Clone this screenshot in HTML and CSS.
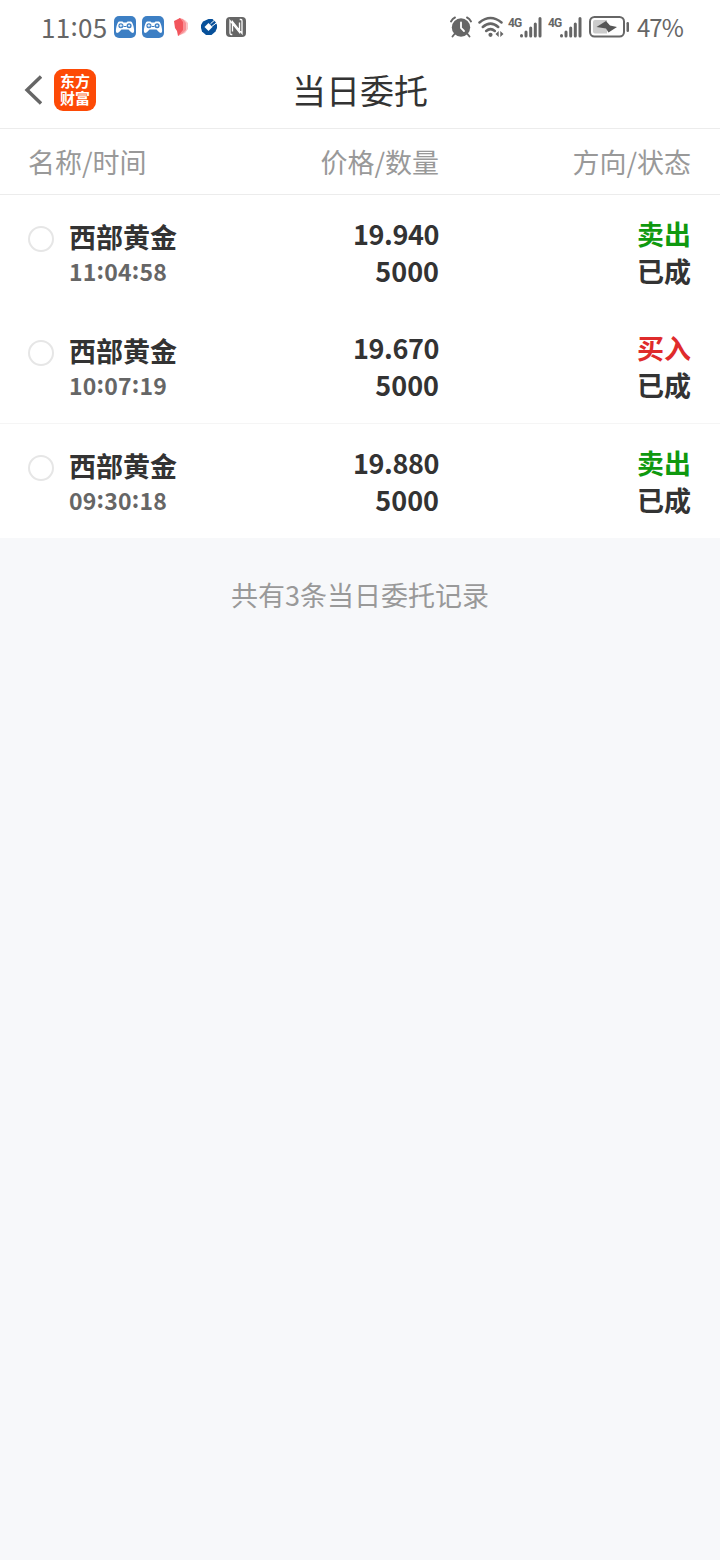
FILE: index.html
```html
<!DOCTYPE html>
<html lang="zh-CN">
<head>
<meta charset="utf-8">
<title>当日委托</title>
<link rel="stylesheet" href="styles.css">
</head>
<body>
<svg class="defs" aria-hidden="true">
  <symbol id="gamepad" viewBox="0 0 22 22">
    <rect width="22" height="22" rx="5" fill="#3d7fc4"/>
    <path d="M5 5.500h3.500l1 1h3l1-1h3.500q2 1 3 7.500q.5 3.500-1 4q-1.500 0-4.500-3.500h-7q-3 3.500-4.500 3.500q-1.500-.5-1-4q1-6.500 3-7.500z" fill="#fff"/>
    <circle cx="6.900" cy="9.700" r="2.500" fill="#3d7fc4"/><circle cx="15.100" cy="9.700" r="2.500" fill="#3d7fc4"/>
    <path d="M5.400 9.700h3M6.900 8.200v3M14 9.700h2.200M15.100 8.600v2.200" stroke="#fff" stroke-width=".9"/>
    <path d="M9.500 10.500h3" stroke="#3d7fc4"/>
  </symbol>
  <symbol id="signal" viewBox="0 0 22 22">
    <path d="M1.500 20v-.5M6 20v-4M10.700 20v-8M15.300 20v-12M20 20v-17.500" fill="none" stroke="#666" stroke-width="3" stroke-linecap="round"/>
  </symbol>
</svg>

<header class="status">
  <div class="status-left">
    <span class="clock">11<span class="colon">:</span>05</span>
    <svg width="22" height="22"><use href="#gamepad"/></svg>
    <svg width="22" height="22"><use href="#gamepad"/></svg>
    <svg class="petal" width="16" height="20" viewBox="0 0 16 20">
      <path d="M6 2L11 3L14 6V12L11 16L4 19z" fill="#fbc3c5"/>
      <path d="M5 1L9 2L12 6V13L9 16L4 19z" fill="#f98f94"/>
      <path d="M0 4L6 1L9 5V13L4 19L3 14L1 11z" fill="#f2555c"/>
    </svg>
    <svg class="bank" width="18" height="18" viewBox="0 0 18 18">
      <path d="M8.500 1H12.500L15.500 4L17 7V10L15.500 13.500L11.500 17H6L2 13.500L1 10V7L3 3.500z" fill="#07509a"/>
      <path d="M8.500 5L12.500 9L8.500 13L4.500 9z" fill="#fff"/>
      <path d="M10.500 5.800L14.500 2.200M12 8.300L17.500 4" stroke="#fff" stroke-width="1"/>
    </svg>
    <svg width="20" height="20" viewBox="0 0 20 20">
      <rect width="20" height="20" rx="4" fill="#666"/>
      <path d="M6.300 17.500H5Q4 17.500 4 16V3.500L13.500 15.500V5.500M13.700 2.500H15Q16 2.500 16 4V16.500L6.500 4.500V14.500" fill="none" stroke="#fff" stroke-width="1.300"/>
    </svg>
  </div>
  <div class="status-right">
    <svg width="22" height="22" viewBox="0 0 22 22">
      <circle cx="11" cy="11.500" r="9.200" fill="#666"/>
      <path d="M1 5.500Q2.500 2.500 5 1.500M21 5.500Q19.500 2.500 17 1.500M4.500 18L2.500 20.500M17.500 18L19.500 20.500" fill="none" stroke="#666" stroke-width="1.900" stroke-linecap="round"/>
      <path d="M11 6.500V12L14 15" fill="none" stroke="#fff" stroke-width="1.800" stroke-linecap="round"/>
    </svg>
    <svg class="wifi" width="26" height="22" viewBox="0 0 26 22">
      <path d="M1.500 6.500Q12.500-2.500 23.500 6.500M4.800 11Q12.500 4.200 20.200 11M8.200 15Q12.500 11.200 16.800 15" fill="none" stroke="#666" stroke-width="2.500" stroke-linecap="round"/>
      <circle cx="12.500" cy="18.800" r="2.100" fill="#666"/>
      <path d="M20.700 15V21L17.500 18zM22.300 15V21L25.500 18z" fill="#666"/>
    </svg>
    <span class="net">4G</span><svg class="bars" width="22" height="22"><use href="#signal"/></svg>
    <span class="net second">4G</span><svg class="bars" width="22" height="22"><use href="#signal"/></svg>
    <svg class="battery" width="41" height="22" viewBox="0 0 41 22">
      <rect x="1" y="1" width="34" height="19.500" rx="4.500" fill="#fff" stroke="#666" stroke-width="2"/>
      <path d="M6 4H18V17.500H6Q4 17.500 4 15.500V6Q4 4 6 4z" fill="#ccc"/>
      <path d="M17 5L21 9.500L28 11L19.500 16.500L17 12.500L7.500 11z" fill="#555"/>
      <rect x="37.500" y="6" width="2.500" height="10" rx="1.200" fill="#666"/>
    </svg>
    <span class="percent">47%</span>
  </div>
</header>

<nav class="titlebar">
  <div class="brand">
    <svg width="18" height="30" viewBox="0 0 18 30"><path d="M17 1.500L3 15L17 28.500" fill="none" stroke="#666" stroke-width="3.400"/></svg>
    <div class="logo"><span>东方</span><span>财富</span></div>
  </div>
  <h1 class="title">当日委托</h1>
</nav>

<div class="columns">
  <span>名称/时间</span><span class="right">价格/数量</span><span class="right">方向/状态</span>
</div>

<main class="orders">
  <article class="order">
    <i class="radio"></i>
    <div class="stock"><div class="name">西部黄金</div><div class="time">11<span class="colon">:</span>04<span class="colon">:</span>58</div></div>
    <div class="cell"><div class="price">19.940</div><div>5000</div></div>
    <div class="cell"><div class="sell">卖出</div><div>已成</div></div>
  </article>
  <article class="order">
    <i class="radio"></i>
    <div class="stock"><div class="name">西部黄金</div><div class="time">10<span class="colon">:</span>07<span class="colon">:</span>19</div></div>
    <div class="cell"><div class="price">19.670</div><div>5000</div></div>
    <div class="cell"><div class="buy">买入</div><div>已成</div></div>
  </article>
  <article class="order ruled">
    <i class="radio"></i>
    <div class="stock"><div class="name">西部黄金</div><div class="time">09<span class="colon">:</span>30<span class="colon">:</span>18</div></div>
    <div class="cell"><div class="price">19.880</div><div>5000</div></div>
    <div class="cell"><div class="sell">卖出</div><div>已成</div></div>
  </article>
</main>

<p class="summary">共有3条当日委托记录</p>
</body>
</html>
```

FILE: styles.css
```css
* { box-sizing: border-box; }

body {
  margin: 0;
  min-height: 1560px;
  background: #f7f8fa;
  color: #333;
  font-family: "Noto Sans CJK SC", "Noto Sans", sans-serif;
}

svg { display: block; flex: none; }
.defs { position: absolute; width: 0; height: 0; }

.status {
  display: flex;
  justify-content: space-between;
  height: 54px;
  padding: 0 37px 0 41px;
  background: #fff;
  color: #666;
}

.status-left,
.status-right { display: flex; align-items: center; }

.clock {
  width: 73px;
  font-size: 26px;
  line-height: 50px;
  letter-spacing: .3px;
}

.colon { line-height: 0; vertical-align: 2px; }

.status-left svg { margin-right: 6px; }
.status-left .petal { margin: 0 10px 0 4px; }
.status-left .bank { margin-right: 8px; }

.wifi { margin-left: 6px; }
.net {
  width: 12px;
  margin: 0 0 9px 4px;
  font: bold 12px/14px Roboto, sans-serif;
  letter-spacing: -.8px;
}
.second { margin-left: 6px; }
.battery { margin-left: 7px; margin-right: 1px; }
.percent {
  width: 46px;
  margin-left: 6px;
  font-size: 24px;
  line-height: 50px;
  white-space: nowrap;
  letter-spacing: -1px;
}

.titlebar {
  display: grid;
  grid-template-columns: 1fr auto 1fr;
  align-items: center;
  height: 75px;
  padding: 0 24px 3px;
  border-bottom: 1px solid #ececec;
  background: #fff;
}

.brand { display: flex; align-items: center; gap: 12px; }

.logo {
  display: flex;
  flex-direction: column;
  align-items: center;
  gap: 1px;
  width: 42px;
  height: 42px;
  padding-top: 4px;
  border-radius: 9px;
  background: #fd4a06;
  color: #fff;
  font-size: 15px;
  font-weight: 700;
  line-height: 16px;
}

.title {
  margin: 0;
  font-size: 34px;
  font-weight: 400;
  line-height: 48px;
}

.columns {
  display: grid;
  grid-template-columns: 210px 201px 252px;
  height: 66px;
  padding: 0 28px;
  border-bottom: 1px solid #ececec;
  background: #fff;
  color: #999;
  font-size: 27px;
  line-height: 65px;
}

.columns .right { text-align: right; }

.orders { background: #fff; }

.order {
  display: grid;
  grid-template-columns: 41px 169px 201px 252px;
  height: 114px;
  padding: 20px 28px 0;
  font-size: 27px;
  font-weight: 700;
  line-height: 37px;
}

.ruled {
  height: 115px;
  border-top: 1px solid #f5f5f5;
}

.radio {
  width: 26px;
  height: 26px;
  margin-top: 11px;
  border: 2px solid #e6e6e6;
  border-radius: 50%;
}

.stock { padding-top: 4px; }
.name { line-height: 35px; }
.time { color: #666; font-size: 23px; line-height: 35px; letter-spacing: .2px; }
.cell { text-align: right; }
.price { letter-spacing: -.4px; }
.sell { color: #0f990f; }
.buy { color: #df2b2b; }

.summary {
  margin: 37px 0 0;
  color: #999;
  font-size: 27px;
  line-height: 40px;
  text-align: center;
}
```
